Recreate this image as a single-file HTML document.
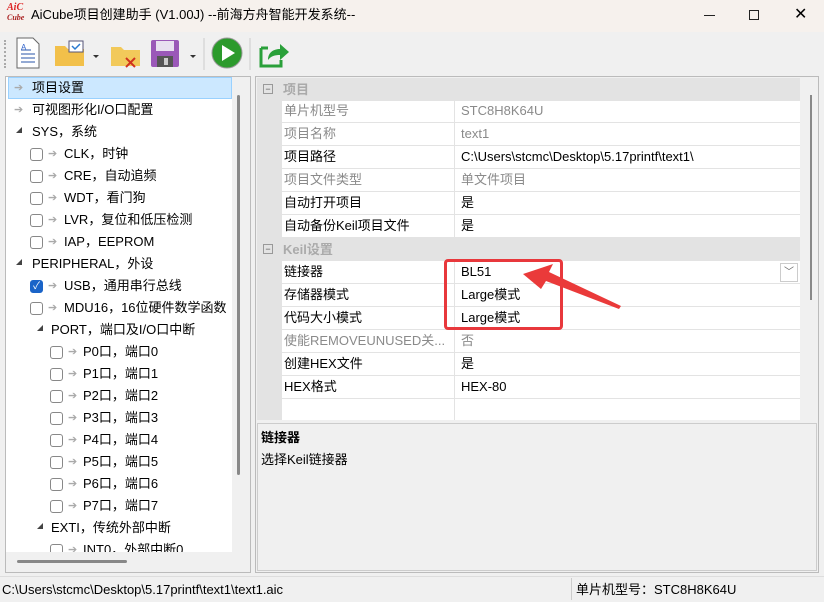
<!DOCTYPE html>
<html><head><meta charset="utf-8"><style>
*{margin:0;padding:0;box-sizing:border-box}
body{width:824px;height:602px;overflow:hidden;background:#f0f0f0;font-family:"Liberation Sans","Noto Sans CJK SC",sans-serif;font-size:13px;color:#000;position:relative}
.a{position:absolute}
.t{position:absolute;white-space:nowrap;line-height:22px;height:22px}
.cb{position:absolute;width:13px;height:13px;border:1px solid #888;border-radius:3px;background:#fff}
.ar{position:absolute;color:#aaa;font-size:11px;line-height:22px}
.tri{position:absolute;width:0;height:0;border-left:6px solid transparent;border-bottom:6px solid #444}
.row{position:absolute;left:282px;width:518px;height:23px;border-bottom:1px solid #e3e3e3}
.row .l{position:absolute;left:0;width:173px;height:22px;padding-left:2px;line-height:22px;border-right:1px solid #e3e3e3;white-space:nowrap;overflow:hidden}
.row .v{position:absolute;left:179px;line-height:22px;white-space:nowrap}
.g{color:#8a8a8a}
.cat{position:absolute;left:257px;width:543px;height:23px;background:#e3e3e3;color:#aaa;font-weight:bold;line-height:23px}
</style></head><body>
<!-- title bar -->
<div class="a" style="left:0;top:0;width:824px;height:32px;background:#f6f1ed"></div>
<div class="a" style="left:7px;top:3px;font:italic bold 10px 'Liberation Serif',serif;color:#d22;line-height:10px">AiC<br><span style="font-size:8px;color:#a22">Cube</span></div>
<div class="t" style="left:31px;top:4px">AiCube项目创建助手 (V1.00J) --前海方舟智能开发系统--</div>
<div class="a" style="left:704px;top:15px;width:11px;height:1px;background:#222"></div>
<div class="a" style="left:749px;top:10px;width:10px;height:10px;border:1px solid #222"></div>
<div class="t" style="left:794px;top:4px;font-size:16px">✕</div>
<!-- toolbar -->
<div class="a" style="left:4px;top:40px;width:1px;height:28px;border-left:2px dotted #aaa"></div>
<svg class="a" style="left:14px;top:36px" width="290" height="36">
 <path d="M3 2h16l6 6v24H3z" fill="#fff" stroke="#666"/><path d="M7 14h10M7 18h14M7 22h14M7 26h14" stroke="#5577bb" stroke-width="1.3"/><text x="7" y="14" font-size="8" fill="#36c" font-family="Liberation Sans">A</text>
 <path d="M41 10h10l3 3h16v17H41z" fill="#f2c04a"/><rect x="55" y="5" width="14" height="11" fill="#fff" stroke="#557"/><path d="M58 10l3 3 5-5" stroke="#2a7ad0" stroke-width="1.5" fill="none"/><path d="M79 19l3 3 3-3z" fill="#333"/>
 <path d="M97 11h10l3 3h16v16H97z" fill="#f2c95a"/><path d="M112 22l9 9M121 22l-9 9" stroke="#d0321e" stroke-width="2"/>
 <rect x="137" y="4" width="28" height="27" rx="2" fill="#9a58b8"/><rect x="142" y="5" width="18" height="10" fill="#e8e0f0"/><rect x="143" y="20" width="16" height="11" fill="#555"/><rect x="150" y="22" width="4" height="7" fill="#ccc"/><path d="M176 19l3 3 3-3z" fill="#333"/>
 <line x1="190" y1="2" x2="190" y2="34" stroke="#ccc"/>
 <circle cx="213" cy="17" r="15" fill="#2c9a2c" stroke="#999"/><path d="M208 9v16l13-8z" fill="#fff"/>
 <line x1="236" y1="2" x2="236" y2="34" stroke="#ccc"/>
 <path d="M247 12h7M247 12v18h20v-6" stroke="#2aa03a" stroke-width="3" fill="none"/><path d="M254 24c0-8 6-11 12-11v-5l9 8-9 8v-5c-5 0-9 1-12 5z" fill="#2aa03a"/>
</svg>
<!-- left panel -->
<div class="a" style="left:5px;top:76px;width:246px;height:497px;border:1px solid #bbb;background:#f0f0f0"></div>
<div class="a" style="left:6px;top:77px;width:226px;height:475px;background:#fff;overflow:hidden">
 <div class="a" style="left:2px;top:0;width:224px;height:22px;background:#cce8ff;border:1px solid #99d1ff"></div>
 <div class="ar" style="left:8px;top:0">➔</div><div class="t" style="left:26px;top:0">项目设置</div>
 <div class="ar" style="left:8px;top:22px">➔</div><div class="t" style="left:26px;top:22px">可视图形化I/O口配置</div>
 <div class="tri" style="left:10px;top:50px"></div><div class="t" style="left:26px;top:44px">SYS，系统</div>
 <div class="cb" style="left:24px;top:71px"></div><div class="ar" style="left:42px;top:66px">➔</div><div class="t" style="left:58px;top:66px">CLK，时钟</div>
 <div class="cb" style="left:24px;top:93px"></div><div class="ar" style="left:42px;top:88px">➔</div><div class="t" style="left:58px;top:88px">CRE，自动追频</div>
 <div class="cb" style="left:24px;top:115px"></div><div class="ar" style="left:42px;top:110px">➔</div><div class="t" style="left:58px;top:110px">WDT，看门狗</div>
 <div class="cb" style="left:24px;top:137px"></div><div class="ar" style="left:42px;top:132px">➔</div><div class="t" style="left:58px;top:132px">LVR，复位和低压检测</div>
 <div class="cb" style="left:24px;top:159px"></div><div class="ar" style="left:42px;top:154px">➔</div><div class="t" style="left:58px;top:154px">IAP，EEPROM</div>
 <div class="tri" style="left:10px;top:182px"></div><div class="t" style="left:26px;top:176px">PERIPHERAL，外设</div>
 <div class="cb" style="left:24px;top:203px;background:#1a64c8;border-color:#1a64c8;color:#fff;font-size:10px;line-height:11px;text-align:center">✓</div><div class="ar" style="left:42px;top:198px">➔</div><div class="t" style="left:58px;top:198px">USB，通用串行总线</div>
 <div class="cb" style="left:24px;top:225px"></div><div class="ar" style="left:42px;top:220px">➔</div><div class="t" style="left:58px;top:220px">MDU16，16位硬件数学函数</div>
 <div class="tri" style="left:31px;top:248px"></div><div class="t" style="left:45px;top:242px">PORT，端口及I/O口中断</div>
 <div class="cb" style="left:44px;top:269px"></div><div class="ar" style="left:62px;top:264px">➔</div><div class="t" style="left:77px;top:264px">P0口，端口0</div>
 <div class="cb" style="left:44px;top:291px"></div><div class="ar" style="left:62px;top:286px">➔</div><div class="t" style="left:77px;top:286px">P1口，端口1</div>
 <div class="cb" style="left:44px;top:313px"></div><div class="ar" style="left:62px;top:308px">➔</div><div class="t" style="left:77px;top:308px">P2口，端口2</div>
 <div class="cb" style="left:44px;top:335px"></div><div class="ar" style="left:62px;top:330px">➔</div><div class="t" style="left:77px;top:330px">P3口，端口3</div>
 <div class="cb" style="left:44px;top:357px"></div><div class="ar" style="left:62px;top:352px">➔</div><div class="t" style="left:77px;top:352px">P4口，端口4</div>
 <div class="cb" style="left:44px;top:379px"></div><div class="ar" style="left:62px;top:374px">➔</div><div class="t" style="left:77px;top:374px">P5口，端口5</div>
 <div class="cb" style="left:44px;top:401px"></div><div class="ar" style="left:62px;top:396px">➔</div><div class="t" style="left:77px;top:396px">P6口，端口6</div>
 <div class="cb" style="left:44px;top:423px"></div><div class="ar" style="left:62px;top:418px">➔</div><div class="t" style="left:77px;top:418px">P7口，端口7</div>
 <div class="tri" style="left:31px;top:446px"></div><div class="t" style="left:45px;top:440px">EXTI，传统外部中断</div>
 <div class="cb" style="left:44px;top:467px"></div><div class="ar" style="left:62px;top:462px">➔</div><div class="t" style="left:77px;top:462px">INT0，外部中断0</div>
</div>
<div class="a" style="left:237px;top:95px;width:3px;height:380px;background:#888;border-radius:2px"></div>
<div class="a" style="left:17px;top:560px;width:110px;height:3px;background:#888;border-radius:2px"></div>
<!-- right panel -->
<div class="a" style="left:255px;top:76px;width:564px;height:497px;border:1px solid #bbb;background:#f0f0f0"></div>
<div class="a" style="left:257px;top:78px;width:543px;height:342px;background:#e3e3e3"></div>
<div class="a" style="left:282px;top:100px;width:518px;height:138px;background:#fff"></div>
<div class="a" style="left:282px;top:261px;width:518px;height:159px;background:#fff"></div>
<div class="cat" style="top:78px"><span style="position:absolute;left:6px;top:6px;width:10px;height:10px;border:1px solid #999;font-size:9px;line-height:8px;text-align:center;color:#555;font-weight:normal">−</span><span style="position:absolute;left:26px">项目</span></div>
<div class="row" style="top:100px"><div class="l g">单片机型号</div><div class="v g">STC8H8K64U</div></div>
<div class="row" style="top:123px"><div class="l g">项目名称</div><div class="v g">text1</div></div>
<div class="row" style="top:146px"><div class="l">项目路径</div><div class="v">C:\Users\stcmc\Desktop\5.17printf\text1\</div></div>
<div class="row" style="top:169px"><div class="l g">项目文件类型</div><div class="v g">单文件项目</div></div>
<div class="row" style="top:192px"><div class="l">自动打开项目</div><div class="v">是</div></div>
<div class="row" style="top:215px"><div class="l">自动备份Keil项目文件</div><div class="v">是</div></div>
<div class="cat" style="top:238px"><span style="position:absolute;left:6px;top:6px;width:10px;height:10px;border:1px solid #999;font-size:9px;line-height:8px;text-align:center;color:#555;font-weight:normal">−</span><span style="position:absolute;left:26px">Keil设置</span></div>
<div class="row" style="top:261px"><div class="l">链接器</div><div class="v">BL51</div></div>
<div class="a" style="left:780px;top:263px;width:18px;height:19px;border:1px solid #ccc;background:#fff;font-size:10px;color:#666;text-align:center;line-height:17px">﹀</div>
<div class="row" style="top:284px"><div class="l">存储器模式</div><div class="v">Large模式</div></div>
<div class="row" style="top:307px"><div class="l">代码大小模式</div><div class="v">Large模式</div></div>
<div class="row" style="top:330px"><div class="l g">使能REMOVEUNUSED关...</div><div class="v g">否</div></div>
<div class="row" style="top:353px"><div class="l">创建HEX文件</div><div class="v">是</div></div>
<div class="row" style="top:376px"><div class="l">HEX格式</div><div class="v">HEX-80</div></div>
<div class="row" style="top:399px;height:21px;border:none"><div class="l" style="height:21px"></div></div>
<div class="a" style="left:810px;top:95px;width:2px;height:205px;background:#888"></div>
<!-- highlight + arrow -->
<div class="a" style="left:444px;top:259px;width:119px;height:71px;border:3px solid #e8383c;border-radius:4px"></div>
<svg class="a" style="left:515px;top:262px" width="110" height="50"><path d="M8 12L38 2 34 10 106 44 104 47 31 19 26 27z" fill="#ea3a3a"/></svg>
<!-- description -->
<div class="a" style="left:257px;top:423px;width:560px;height:148px;border:1px solid #ccc;background:#f0f0f0"></div>
<div class="t" style="left:261px;top:427px;font-weight:bold">链接器</div>
<div class="t" style="left:261px;top:449px">选择Keil链接器</div>
<!-- status -->
<div class="a" style="left:0;top:576px;width:824px;height:1px;background:#ddd"></div>
<div class="t" style="left:2px;top:579px">C:\Users\stcmc\Desktop\5.17printf\text1\text1.aic</div>
<div class="a" style="left:571px;top:578px;width:1px;height:22px;background:#ccc"></div>
<div class="t" style="left:576px;top:579px">单片机型号：STC8H8K64U</div>
</body></html>
